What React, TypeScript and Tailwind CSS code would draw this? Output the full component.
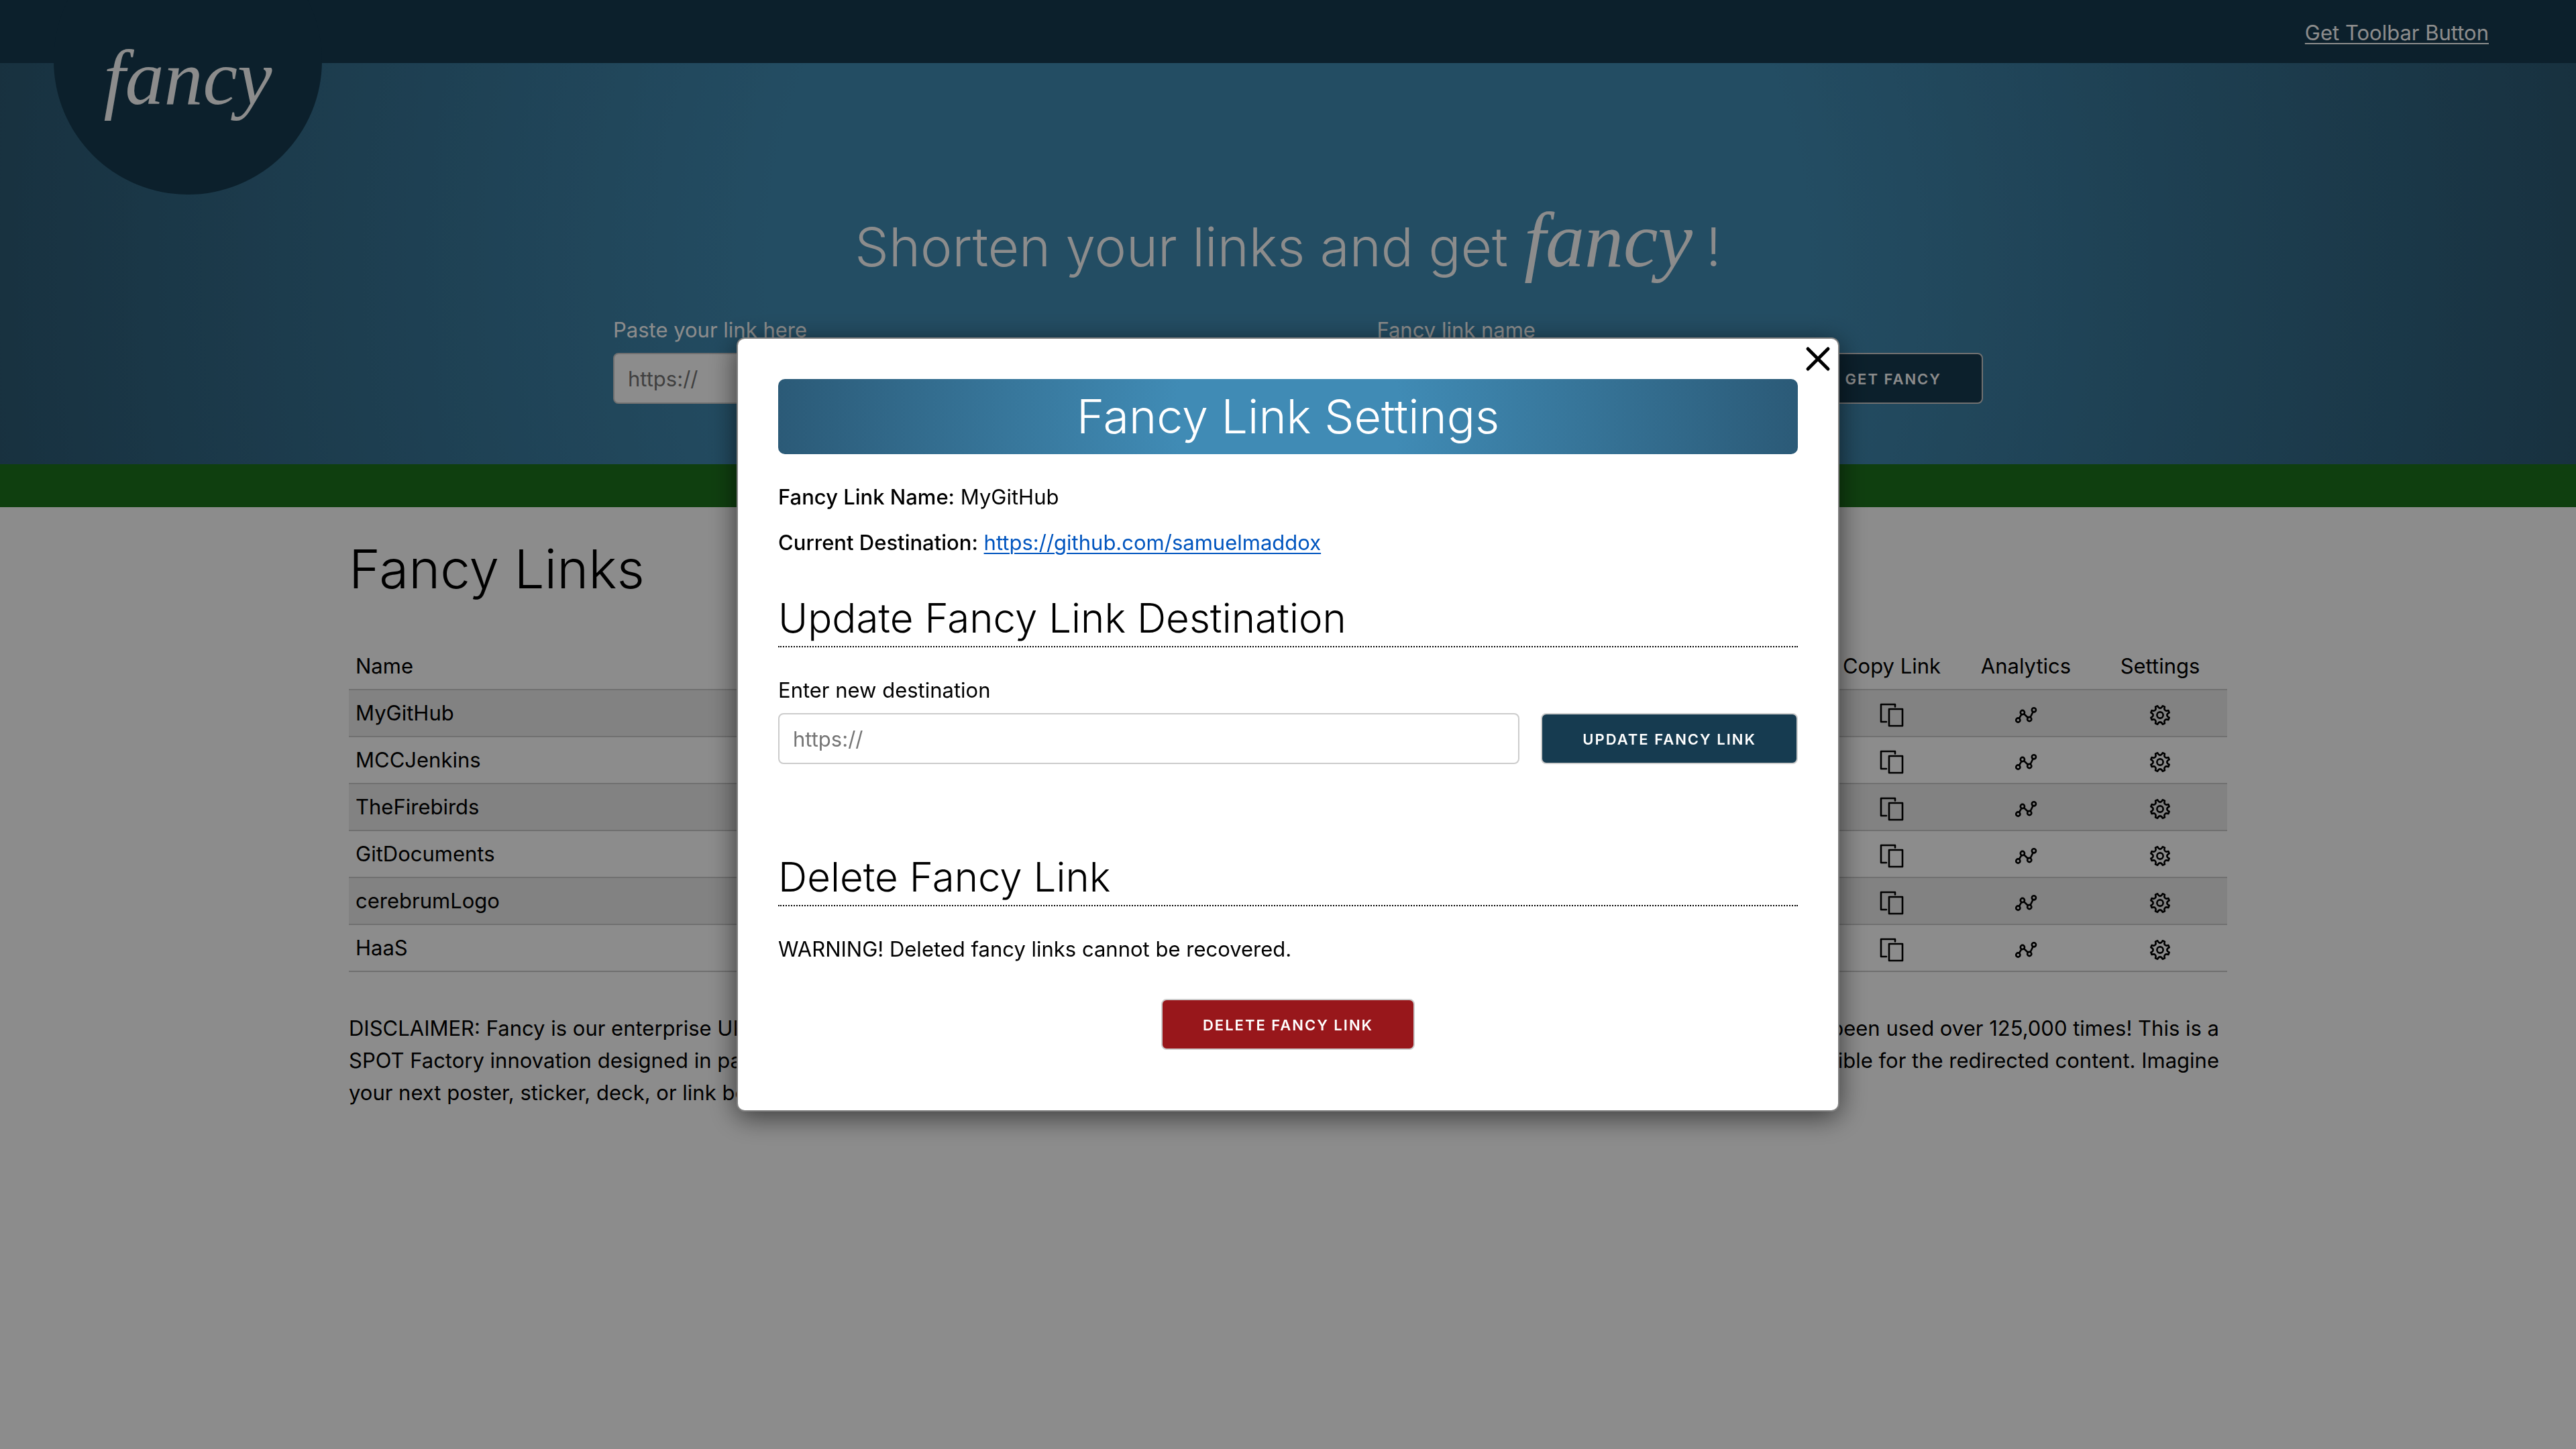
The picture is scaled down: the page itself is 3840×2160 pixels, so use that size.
import type { ReactNode } from "react";

const links = ["MyGitHub", "MCCJenkins", "TheFirebirds", "GitDocuments", "cerebrumLogo", "HaaS"];

const disclaimer = [
  ["DISCLAIMER: Fancy is our enterprise URL shortener.", "Fancy links have been used over 125,000 times! This is a"],
  ["SPOT Factory innovation designed in partnership.", "We are not responsible for the redirected content. Imagine"],
];

function CopyIcon() {
  return (
    <svg viewBox="0 0 36 36" className="size-9" fill="none" stroke="currentColor" strokeWidth="2.6" strokeLinecap="round" strokeLinejoin="round">
      <path d="M10 28H2V2h21v3.5" />
      <rect x="14" y="9" width="20" height="25" />
    </svg>
  );
}

function AnalyticsIcon() {
  return (
    <svg viewBox="0 0 36 36" className="size-9" fill="none" stroke="currentColor" strokeWidth="2.6">
      <circle cx="6.3" cy="25.5" r="3.1" />
      <circle cx="12.9" cy="14" r="3.1" />
      <circle cx="23.2" cy="24" r="3.1" />
      <circle cx="29.9" cy="10.3" r="3.1" />
      <path d="M7.9 22.8 11.4 16.8M15.1 16.2l5.9 5.6M24.6 21.2l3.9-8" />
    </svg>
  );
}

function GearIcon() {
  const rad = Math.PI / 180;
  const at = (radius: number, deg: number) =>
    `${(18 + radius * Math.cos(deg * rad)).toFixed(2)} ${(18 + radius * Math.sin(deg * rad)).toFixed(2)}`;
  let d = "";
  for (let i = 0; i < 8; i++) {
    const a = i * 45 + 22.5;
    d += `${i === 0 ? "M" : "L"}${at(14.2, a - 7)}L${at(14.2, a + 7)}C${at(9.4, a + 11)} ${at(9.4, a + 34)} ${at(14.2, a + 38)}`;
  }
  return (
    <svg viewBox="0 0 36 36" className="size-9" fill="none" stroke="currentColor" strokeWidth="2.6" strokeLinejoin="round">
      <path d={d + "Z"} />
      <circle cx="18" cy="18" r="4.6" />
    </svg>
  );
}

function IconCell({ label, children }: { label: string; children: ReactNode }) {
  return (
    <td className="p-0 text-center">
      <button type="button" aria-label={label} className="inline-flex align-middle">
        {children}
      </button>
    </td>
  );
}

function Wordmark() {
  return <span className="font-['Liberation_Serif',serif] text-[116px] leading-[60px] italic">fancy</span>;
}

const field =
  "h-[76px] w-full rounded-lg border-2 border-[#ccc] bg-white px-5 text-[31px] text-black placeholder:text-[#757575] placeholder:opacity-100";
const button =
  "h-[76px] rounded-lg border-2 border-[#ccc] px-[60px] pt-0.5 text-[22px] font-semibold tracking-[2px] whitespace-nowrap text-white uppercase";

export default function App() {
  return (
    <div className="relative min-h-screen bg-white font-['Inter',sans-serif] text-[31px] leading-[48px] font-normal text-black">
      <header className="relative flex h-[94px] items-center justify-end bg-[#163b50] px-[130px] text-white">
        <a href="#home" aria-label="Fancy home" className="absolute -top-[110px] left-20 flex size-[400px] justify-center rounded-full bg-[#163b50] pt-[196px]">
          <Wordmark />
        </a>
        <a href="#toolbar" className="mt-1 underline decoration-2 underline-offset-4">
          Get Toolbar Button
        </a>
      </header>

      <section className="bg-[radial-gradient(circle,#418cb4_40%,#2c5a74_100%)] pt-[214px] pb-[90px] text-white">
        <h1 className="flex items-baseline justify-center gap-6 text-[80px] leading-[120px] font-light">
          Shorten your links and get
          <span className="flex items-baseline gap-5">
            <Wordmark />
            <span>!</span>
          </span>
        </h1>
        <form className="mx-auto mt-10 flex w-full max-w-[2072px] items-end gap-10 pl-[30px]">
          <div className="flex flex-[1098] flex-col gap-2.5">
            <label htmlFor="link">Paste your link here</label>
            <input id="link" type="text" placeholder="https://" className={field} />
          </div>
          <div className="flex flex-[596] flex-col gap-2.5">
            <label htmlFor="name">Fancy link name</label>
            <input id="name" type="text" className={field} />
          </div>
          <button type="button" className={`${button} bg-[#163b50]`}>
            Get Fancy
          </button>
        </form>
      </section>
      <div className="h-16 bg-[#1d741d]" />

      <main className="mx-auto max-w-[2800px] pt-[42px]">
        <h2 className="text-[80px] leading-[100px] font-light">Fancy Links</h2>
        <table className="mt-[60px] w-full table-fixed border-collapse">
          <thead>
            <tr className="h-[70px] border-b-2 border-[#ccc]">
              <th className="px-2.5 py-2.5 text-left font-normal">Name</th>
              <th className="w-[200px] px-0 py-2.5 font-normal">Copy Link</th>
              <th className="w-[200px] px-0 py-2.5 font-normal">Analytics</th>
              <th className="w-[200px] px-0 py-2.5 font-normal">Settings</th>
            </tr>
          </thead>
          <tbody>
            {links.map((name) => (
              <tr key={name} className="h-[70px] border-b-2 border-[#ccc] odd:bg-[#ededed]">
                <td className="p-2.5">{name}</td>
                <IconCell label={`Copy ${name}`}>
                  <CopyIcon />
                </IconCell>
                <IconCell label={`Analytics for ${name}`}>
                  <AnalyticsIcon />
                </IconCell>
                <IconCell label={`Settings for ${name}`}>
                  <GearIcon />
                </IconCell>
              </tr>
            ))}
          </tbody>
        </table>
        <div className="mt-[60px] pr-3">
          {disclaimer.map(([start, end]) => (
            <p key={start} className="flex justify-between">
              <span>{start}</span>
              <span>{end}</span>
            </p>
          ))}
          <p>your next poster, sticker, deck, or link being fancy!</p>
        </div>
      </main>

      <div className="fixed inset-0 flex items-center justify-center bg-black/45">
        <div
          role="dialog"
          aria-modal="true"
          aria-labelledby="dialog-title"
          className="relative w-full max-w-[1644px] rounded-xl border-2 border-[#808080] bg-white px-[60px] pt-[60px] pb-[90px] shadow-[0_8px_40px_rgba(0,0,0,0.6)]"
        >
          <button type="button" aria-label="Close" className="absolute top-2.5 right-2.5">
            <svg viewBox="0 0 40 40" className="size-10" fill="none" stroke="currentColor" strokeWidth="5" strokeLinecap="round">
              <path d="M5 5l30 30M35 5 5 35" />
            </svg>
          </button>
          <h2 id="dialog-title" className="rounded-[10px] bg-[radial-gradient(circle,#408bb5_22%,#2b5a77_100%)] text-center text-[70px] leading-[112px] font-light text-white">
            Fancy Link Settings
          </h2>
          <p className="mt-10">
            <strong className="font-medium">Fancy Link Name:</strong> MyGitHub
          </p>
          <p className="mt-5">
            <strong className="font-medium">Current Destination:</strong>{" "}
            <a href="https://github.com/samuelmaddox" className="text-[#0055bf] underline decoration-2 underline-offset-4">
              https://github.com/samuelmaddox
            </a>
          </p>

          <h3 className="mt-[52px] border-b-2 border-dotted border-black pb-1.5 text-[60px] leading-[72px] font-light">
            Update Fancy Link Destination
          </h3>
          <form className="mt-10 flex items-end gap-8">
            <div className="flex flex-1 flex-col gap-2.5">
              <label htmlFor="destination">Enter new destination</label>
              <input id="destination" type="text" placeholder="https://" className={field} />
            </div>
            <button type="button" className={`${button} bg-[#163b50]`}>
              Update Fancy Link
            </button>
          </form>

          <h3 className="mt-[132px] border-b-2 border-dotted border-black pb-1.5 text-[60px] leading-[72px] font-light">
            Delete Fancy Link
          </h3>
          <p className="mt-10">WARNING! Deleted fancy links cannot be recovered.</p>
          <div className="mt-[50px] flex justify-center">
            <button type="button" className={`${button} bg-[#98171b]`}>
              Delete Fancy Link
            </button>
          </div>
        </div>
      </div>
    </div>
  );
}
